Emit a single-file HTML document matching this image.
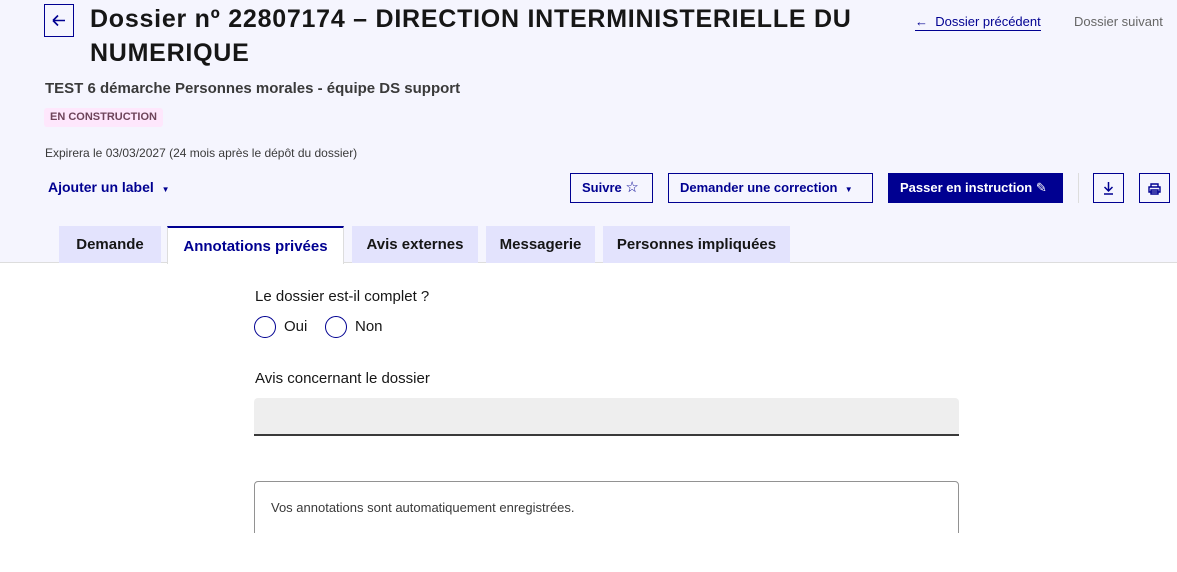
<!DOCTYPE html>
<html><head><meta charset="utf-8"><style>
*{box-sizing:border-box;margin:0;padding:0}
body{width:1177px;height:572px;overflow:hidden;background:#fff;font-family:"Liberation Sans",Arial,sans-serif;color:#161616;position:relative}
.hdr{position:absolute;left:0;top:0;width:1177px;height:263px;background:#f5f5fe;border-bottom:1px solid #ddd}
.abs{position:absolute;white-space:nowrap}
.back{left:44px;top:4px;width:30px;height:33px;border:1px solid #000091}
h1{position:absolute;left:90px;top:2px;font-size:25px;line-height:34px;font-weight:bold;letter-spacing:0.75px;color:#161616;white-space:nowrap}
.btn{position:absolute;top:173px;height:30px;border:1px solid #000091;color:#000091;font-size:13px;font-weight:bold;line-height:28px;padding:0 11px;white-space:nowrap}
.tab{position:absolute;top:226px;height:37px;background:#e3e3fd;font-size:15px;font-weight:bold;line-height:37px;text-align:center;color:#161616}
</style></head><body>
<div class="hdr"></div>
<div class="abs back"><svg width="28" height="31" viewBox="0 0 28 31"><path d="M8 15.5h12M8 15.5l5-5M8 15.5l5 5" stroke="#000091" stroke-width="1.6" fill="none"/></svg></div>
<h1>Dossier nº 22807174 – DIRECTION INTERMINISTERIELLE DU<br>NUMERIQUE</h1>
<div class="abs" style="left:915px;top:14px;font-size:13px;color:#000091;border-bottom:1px solid #000091;padding-bottom:1px">← &nbsp;Dossier précédent</div>
<div class="abs" style="left:1074px;top:14px;font-size:13px;color:#666">Dossier suivant</div>
<div class="abs" style="left:45px;top:80px;font-size:15px;font-weight:bold;color:#3a3a3a">TEST 6 démarche Personnes morales - équipe DS support</div>
<div class="abs" style="left:44px;top:108px;height:19px;padding:0 6px;background:#fee7fc;color:#6e445a;font-size:11px;font-weight:bold;line-height:19px;border-radius:3px">EN CONSTRUCTION</div>
<div class="abs" style="left:45px;top:146px;font-size:12px;color:#3a3a3a">Expirera le 03/03/2027 (24 mois après le dépôt du dossier)</div>
<div class="abs" style="left:48px;top:179px;font-size:14px;font-weight:bold;color:#000091">Ajouter un label &nbsp;<span style="font-size:8px">▼</span></div>
<div class="btn" style="left:570px;width:83px">Suivre <span style="font-weight:normal;font-size:15px">☆</span></div>
<div class="btn" style="left:668px;width:205px">Demander une correction &nbsp;<span style="font-size:8px">▼</span></div>
<div class="btn" style="left:888px;width:175px;background:#000091;color:#fff">Passer en instruction <span style="font-weight:normal">✎</span></div>
<div class="abs" style="left:1078px;top:173px;width:1px;height:30px;background:#ddd"></div>
<div class="btn" style="left:1093px;width:31px;padding:0"><svg width="29" height="28" viewBox="0 0 29 28"><path d="M14.5 8v9M10.5 13l4 4 4-4M10 20h9" stroke="#000091" stroke-width="1.5" fill="none"/></svg></div>
<div class="btn" style="left:1139px;width:31px;padding:0"><svg width="29" height="28" viewBox="0 0 29 28"><path d="M11 10h7v3h-7zM9 13h11v5h-11zM11 16h7v4h-7z" stroke="#000091" stroke-width="1.4" fill="none"/></svg></div>
<div class="tab" style="left:59px;width:102px">Demande</div>
<div class="tab" style="left:167px;width:177px;background:#fff;color:#000091;border-top:2px solid #000091;border-left:1px solid #ddd;border-right:1px solid #ddd;height:38px">Annotations privées</div>
<div class="tab" style="left:352px;width:126px">Avis externes</div>
<div class="tab" style="left:486px;width:109px">Messagerie</div>
<div class="tab" style="left:603px;width:187px">Personnes impliquées</div>
<div class="abs" style="left:255px;top:288px;font-size:15px">Le dossier est-il complet ?</div>
<div class="abs" style="left:254px;top:316px;width:22px;height:22px;border:1px solid #000091;border-radius:50%"></div>
<div class="abs" style="left:284px;top:318px;font-size:15px">Oui</div>
<div class="abs" style="left:325px;top:316px;width:22px;height:22px;border:1px solid #000091;border-radius:50%"></div>
<div class="abs" style="left:355px;top:318px;font-size:15px">Non</div>
<div class="abs" style="left:255px;top:370px;font-size:15px">Avis concernant le dossier</div>
<div class="abs" style="left:254px;top:398px;width:705px;height:38px;background:#eee;border-bottom:2px solid #3a3a3a;border-radius:4px 4px 0 0"></div>
<div class="abs" style="left:254px;top:481px;width:705px;height:80px;border:1px solid #929292;border-radius:4px"></div>
<div class="abs" style="left:271px;top:500px;font-size:13px;color:#3a3a3a">Vos annotations sont automatiquement enregistrées.</div>
<div class="abs" style="left:0;top:533px;width:1177px;height:39px;background:#fff"></div>
</body></html>
